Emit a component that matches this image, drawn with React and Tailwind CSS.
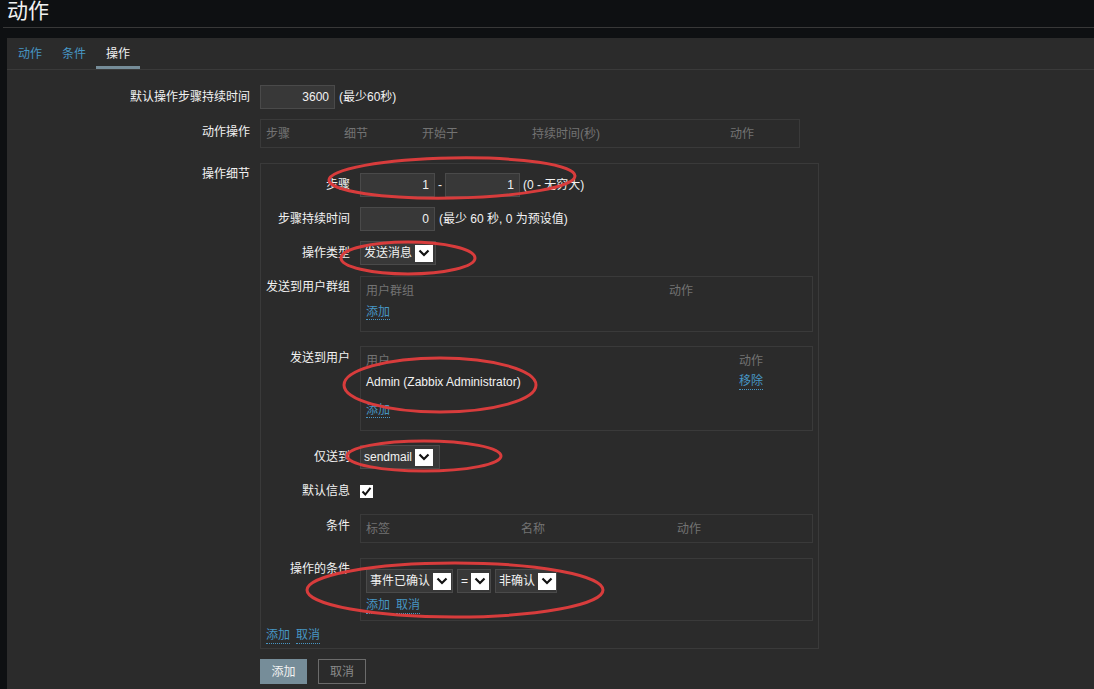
import React from 'react';

const FONT = "font-['Liberation_Sans','Noto_Sans_CJK_SC',sans-serif]";

const Chevron = () => (
  <span className="flex items-center justify-center w-[18px] h-[17px] bg-white shrink-0">
    <svg width="12" height="8" viewBox="0 0 12 8">
      <path d="M1.5 1.5 L6 6 L10.5 1.5" fill="none" stroke="#111" strokeWidth="2.2" />
    </svg>
  </span>
);

const Select = ({ label, className = '' }) => (
  <div className={`h-[24px] flex items-center gap-[3px] pl-[3px] pr-[2px] bg-[#383838] border border-[#4a4a4a] text-[12px] text-[#f2f2f2] ${className}`}>
    <span className="whitespace-nowrap">{label}</span>
    <Chevron />
  </div>
);

const Input = ({ value, className = 'w-[75px]' }) => (
  <div className={`h-[24px] flex items-center justify-end pr-[5px] bg-[#383838] border border-[#4a4a4a] text-[12px] text-[#f2f2f2] ${className}`}>
    {value}
  </div>
);

const Link = ({ children }) => (
  <span className="text-[#4796c4] border-b border-dotted border-[#4796c4] leading-[15px]">{children}</span>
);

const Label = ({ children, className = '' }) => (
  <div className={`text-right text-[12px] text-[#f2f2f2] whitespace-nowrap ${className}`}>{children}</div>
);

const Ellipses = () => (
  <svg className="absolute left-0 top-0 pointer-events-none" width="1094" height="689">
    <g fill="none" stroke="#d83c3c" strokeWidth="3">
      <ellipse cx="452" cy="178" rx="123" ry="20" transform="rotate(-1 452 178)" />
      <ellipse cx="408" cy="258" rx="67" ry="16" />
      <ellipse cx="440" cy="385" rx="96" ry="27" />
      <ellipse cx="424" cy="456" rx="77" ry="15" />
      <ellipse cx="455" cy="590" rx="148" ry="27" />
    </g>
  </svg>
);

export default function App() {
  return (
    <div className={`relative w-[1094px] h-[689px] overflow-hidden bg-[#0e1012] ${FONT}`}>
      <div className="h-[28px] ml-[3px] border-b border-[#383838] overflow-hidden">
        <div className="pl-[4px] text-[21px] leading-[22px] text-[#f2f2f2]">动作</div>
      </div>
      <div className="mt-[10px] ml-[7px] h-[700px] bg-[#2b2b2b]">
        {/* tabs */}
        <div className="flex pl-[1px] h-[32px] border-b border-[#3a3a3a] text-[12px]">
          <div className="w-[44px] flex items-center justify-center text-[#4796c4]">动作</div>
          <div className="w-[44px] flex items-center justify-center text-[#4796c4]">条件</div>
          <div className="w-[44px] flex items-center justify-center text-[#f2f2f2] border-b-[3px] border-[#768d99] pt-[3px]">操作</div>
        </div>

        <div className="pt-[15px] grid grid-cols-[243px_1fr] gap-x-[10px]">
          <Label className="leading-[24px]">默认操作步骤持续时间</Label>
          <div className="flex items-center gap-[4px] text-[12px] text-[#f2f2f2]">
            <Input value="3600" />
            <span>(最少60秒)</span>
          </div>

          <Label className="mt-[10px] pt-[5px] leading-[16px]">动作操作</Label>
          <div className="mt-[10px] w-[540px] h-[29px] border border-[#3a3a3a] flex items-center text-[12px] text-[#737373]">
            <span className="w-[83px] pl-[5px]">步骤</span>
            <span className="w-[78px]">细节</span>
            <span className="w-[110px]">开始于</span>
            <span className="w-[198px]">持续时间(秒)</span>
            <span>动作</span>
          </div>

          <Label className="mt-[15px] pt-[3px] leading-[16px]">操作细节</Label>
          <div className="mt-[15px] w-[559px] border border-[#3a3a3a] pt-[9px] pb-[4px] pl-[5px] pr-[5px] text-[12px] text-[#f2f2f2]">
            <div className="grid grid-cols-[84px_1fr] gap-x-[10px]">
              <Label className="leading-[24px]">步骤</Label>
              <div className="flex items-center gap-[3px]">
                <Input value="1" />
                <span>-</span>
                <Input value="1" />
                <span>(0 - 无穷大)</span>
              </div>

              <Label className="mt-[10px] leading-[24px]">步骤持续时间</Label>
              <div className="mt-[10px] flex items-center gap-[4px]">
                <Input value="0" />
                <span>(最少 60 秒, 0 为预设值)</span>
              </div>

              <Label className="mt-[10px] leading-[24px]">操作类型</Label>
              <div className="mt-[10px] flex">
                <Select label="发送消息" className="w-[76px]" />
              </div>

              <Label className="mt-[11px] pt-[3px] leading-[16px]">发送到用户群组</Label>
              <div className="mt-[11px] h-[56px] border border-[#3a3a3a] px-[5px] pt-[6px]">
                <div className="flex leading-[16px] text-[#737373]">
                  <span className="w-[303px]">用户群组</span>
                  <span>动作</span>
                </div>
                <div className="mt-[5px] leading-[16px]"><Link>添加</Link></div>
              </div>

              <Label className="mt-[14px] pt-[4px] leading-[16px]">发送到用户</Label>
              <div className="mt-[14px] h-[85px] border border-[#3a3a3a] px-[5px] pt-[6px]">
                <div className="flex leading-[16px] text-[#737373]">
                  <span className="w-[373px]">用户</span>
                  <span>动作</span>
                </div>
                <div className="mt-[5px] flex leading-[16px]">
                  <span className="w-[373px]">Admin (Zabbix Administrator)</span>
                  <Link>移除</Link>
                </div>
                <div className="mt-[12px] leading-[16px]"><Link>添加</Link></div>
              </div>

              <Label className="mt-[14px] leading-[24px]">仅送到</Label>
              <div className="mt-[14px] flex">
                <Select label="sendmail" className="w-[80px]" />
              </div>

              <Label className="mt-[11px] leading-[22px]">默认信息</Label>
              <div className="mt-[11px] h-[22px] flex items-center">
                <span className="w-[13px] h-[13px] bg-white flex items-center justify-center">
                  <svg width="11" height="11" viewBox="0 0 11 11">
                    <path d="M1.5 5.5 L4.3 8.5 L9.5 1.8" fill="none" stroke="#111" strokeWidth="2" />
                  </svg>
                </span>
              </div>

              <Label className="mt-[12px] pt-[4px] leading-[16px]">条件</Label>
              <div className="mt-[12px] h-[29px] border border-[#3a3a3a] px-[5px] flex items-center text-[#737373]">
                <span className="w-[155px]">标签</span>
                <span className="w-[156px]">名称</span>
                <span>动作</span>
              </div>

              <Label className="mt-[15px] pt-[3px] leading-[16px]">操作的条件</Label>
              <div className="mt-[15px] h-[63px] border border-[#3a3a3a] px-[5px] pt-[10px]">
                <div className="flex gap-[4px]">
                  <Select label="事件已确认" className="w-[87px]" />
                  <Select label="=" className="w-[34px]" />
                  <Select label="非确认" className="w-[62px]" />
                </div>
                <div className="mt-[5px] flex gap-[6px] leading-[16px]">
                  <Link>添加</Link>
                  <Link>取消</Link>
                </div>
              </div>
            </div>
            <div className="mt-[7px] flex gap-[6px] leading-[16px]">
              <Link>添加</Link>
              <Link>取消</Link>
            </div>
          </div>

          <div />
          <div className="mt-[10px] flex gap-[11px] text-[12px]">
            <div className="w-[47px] h-[25px] flex items-center justify-center bg-[#768d99] text-[#f2f2f2]">添加</div>
            <div className="w-[48px] h-[25px] flex items-center justify-center border border-[#6b6b6b] text-[#8a8a8a]">取消</div>
          </div>
        </div>
      </div>
      <Ellipses />
    </div>
  );
}
